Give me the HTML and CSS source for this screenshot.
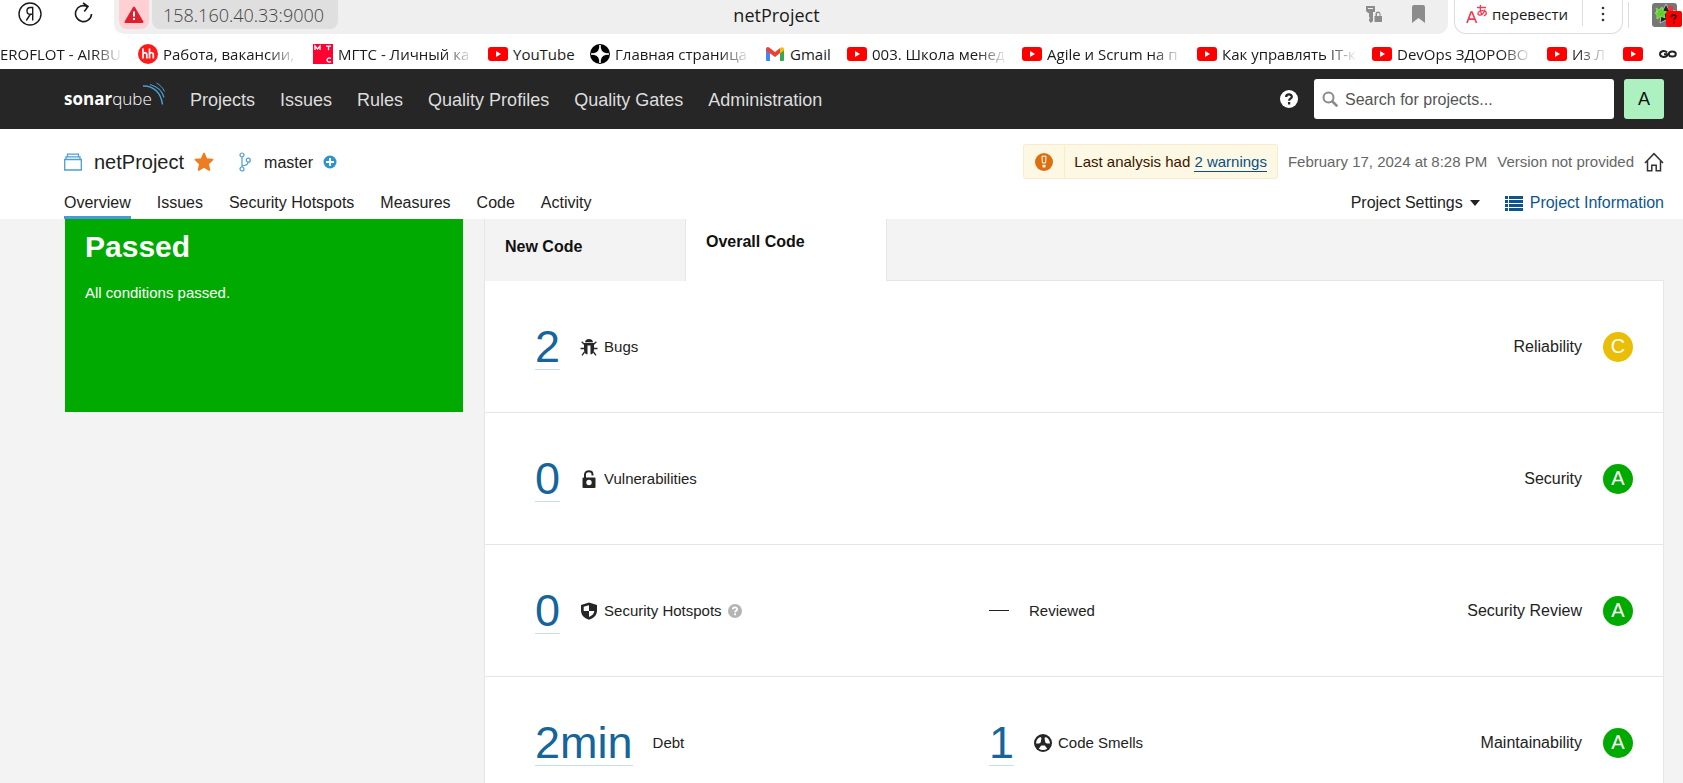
FILE: index.html
```
<!DOCTYPE html>
<html lang="en">
<head>
<meta charset="utf-8">
<title>netProject</title>
<link rel="stylesheet" href="styles.css">
</head>
<body>
<svg class="defs" aria-hidden="true">
  <symbol id="yt" viewBox="0 0 20 20"><rect y="3" width="20" height="14" rx="3" fill="#f00"/><path d="M8 7v6l5-3z" fill="#fff"/></symbol>
</svg>
<div class="app">
  <div class="browser">
    <div class="toolbar">
      <button class="tool ya" aria-label="Yandex"><svg width="24" height="24" viewBox="0 0 24 24" fill="none" stroke="#1a1a1a" stroke-width="1.4"><circle cx="12" cy="12" r="11"/><path d="M14.7 18.5V5.5h-2.2c-2.200 0-3.500 1.400-3.500 3.500 0 2 1.200 3.300 3.300 3.300h2.400M12.200 12.500l-3.900 6"/></svg></button>
      <button class="tool reload" aria-label="Reload"><svg width="20" height="22" viewBox="0 0 20 22" fill="none" stroke="#1a1a1a" stroke-width="1.600"><path d="M17.500 12a8 8 0 1 1-4-7.300M9 .8l5 3.700-3.700 5"/></svg></button>
      <div class="omnibox">
        <button class="alert" aria-label="Not secure"><svg width="20" height="18" viewBox="0 0 20 18"><path d="M10 1.500 18.500 16H1.500z" fill="#e0202e" stroke="#e0202e" stroke-width="2" stroke-linejoin="round"/><path d="M10 5.500v5M10 12v2" stroke="#fff" stroke-width="2"/></svg></button>
        <button class="url">158.160.40.33:9000</button>
        <span class="page-title">netProject</span>
        <span class="omni-icons">
          <svg width="18" height="18" viewBox="0 0 18 18" fill="#8c8c8c"><path d="M1 1h9v6H8v9l-2 2-2-2v-2l1-1-1-1V8H3L1 6zM3 3v1h5V3z" fill-rule="evenodd"/><path d="M9.500 11h1V9a2.500 2.500 0 0 1 5 0v2h1.500v6H9.500zm2.500 0h2.500V9.300c0-1.600-2.500-1.600-2.500 0z" fill-rule="evenodd"/></svg>
          <svg width="13" height="18" viewBox="0 0 13 18" fill="#8c8c8c"><path d="M2 0h9a2 2 0 0 1 2 2v16l-6.500-5L0 18V2a2 2 0 0 1 2-2z"/></svg>
        </span>
      </div>
      <div class="translate">
        <button class="tr-main"><svg width="22" height="20" viewBox="0 0 22 20" fill="none" stroke="#f33b52" stroke-width="1.700"><path d="M1 19 5 8h1l4.500 11M2.500 15.200h6.500"/><path d="M11 3.500h9M14.500.8c-.5 4-.3 7 1.300 9.500M19 5.500c-1.500 4.500-4 6-6 5.500-2.500-.8-.5-4.800 4-4.300 4 .3 4.500 3.800.7 5.300" stroke-width="1.300"/></svg>перевести</button>
        <button class="tr-more" aria-label="More"><svg width="4" height="16" viewBox="0 0 4 16" fill="#333"><circle cx="2" cy="2" r="1.300"/><circle cx="2" cy="8" r="1.300"/><circle cx="2" cy="14" r="1.300"/></svg></button>
      </div>
      <button class="ext" aria-label="Extension"><svg width="31" height="26" viewBox="0 0 31 26"><rect x="0" y="1" width="25" height="24" rx="3" fill="#777"/><path d="m14 2 3 6 7 1-5 5 1 7-6-3-6 3 1-7-5-5 7-1z" fill="#222" stroke="#bbb"/><path d="M16 4h5v7h-4z" fill="#e33"/><path d="m4 6 3 2 3-3 1 4 4 1-3 2 1 4-4-2-4 3v-4l-2-2 3-1z" fill="#6c3" stroke="#7e4"/><rect x="14" y="9" width="16" height="16" rx="2" fill="#f00"/><path d="M19.500 15.200c0-3 4.500-2.800 4.500-.4 0 1.700-2.200 1.500-2.200 3.400M21.800 19.800v2" stroke="#400" stroke-width="1.800" fill="none"/></svg></button>
    </div>
    <nav class="bookmarks" aria-label="Bookmarks">
      <a href="#" class="bm first"><span>EROFLOT - AIRBU</span></a>
      <a href="#" class="bm"><svg width="20" height="20" viewBox="0 0 20 20"><circle cx="10" cy="10" r="10" fill="#ff1a1a"/><path d="M5 4.500v10M5 10.500c.5-2.400 3.800-2.400 3.800.2v3.800M11.500 4.500v10M11.500 10.500c.5-2.400 3.800-2.400 3.800.2v3.800" stroke="#fff" stroke-width="1.700" fill="none"/></svg><span>Работа, вакансии,</span></a>
      <a href="#" class="bm"><svg width="20" height="20" viewBox="0 0 20 20"><path fill="#ff0032" d="M0 0h20v20H0z"/><path d="M2 6V2l2.500 3L7 2v4M13 2.200h5M15.500 2v4.200M18 14.500c-1.500-1.200-4-.6-4 1.500s2.500 2.700 4 1.500" stroke="#fff" stroke-width="1.300" fill="none"/></svg><span>МГТС - Личный ка</span></a>
      <a href="#" class="bm w-62"><svg width="20" height="20"><use href="#yt"/></svg><span>YouTube</span></a>
      <a href="#" class="bm"><svg width="20" height="20" viewBox="0 0 20 20"><circle cx="10" cy="10" r="10"/><path d="M10 1c.6 6.500 2.500 8.400 9 9-6.500.6-8.400 2.500-9 9-.6-6.500-2.500-8.400-9-9 6.500-.6 8.400-2.500 9-9z" fill="#fff" stroke="#fff"/></svg><span>Главная страница</span></a>
      <a href="#" class="bm w-42"><svg width="20" height="20" viewBox="0 0 20 20"><path fill="#4285f4" d="M1 5h4v12H2a1 1 0 0 1-1-1z"/><path fill="#34a853" d="M15 5h4v11a1 1 0 0 1-1 1h-3z"/><path fill="#ea4335" d="M1 5.500c0-2.500 2-3 3.500-1.800L10 8l5.500-4.300v5L10 13 1 6.500z"/><path fill="#fbbc04" d="M15 4c2-1.500 4-.6 4 1.500v1L15 9.500z"/></svg><span>Gmail</span></a>
      <a href="#" class="bm"><svg width="20" height="20"><use href="#yt"/></svg><span>003. Школа менед</span></a>
      <a href="#" class="bm"><svg width="20" height="20"><use href="#yt"/></svg><span>Agile и Scrum на п</span></a>
      <a href="#" class="bm"><svg width="20" height="20"><use href="#yt"/></svg><span>Как управлять IT-к</span></a>
      <a href="#" class="bm"><svg width="20" height="20"><use href="#yt"/></svg><span>DevOps ЗДОРОВО</span></a>
      <a href="#" class="bm w-36"><svg width="20" height="20"><use href="#yt"/></svg><span>Из Л</span></a>
      <a href="#" class="bm" aria-label="YouTube"><svg width="20" height="20"><use href="#yt"/></svg></a>
      <a href="#" class="bm" aria-label="GO"><svg width="20" height="20" viewBox="0 0 20 20" fill="none" stroke="#222" stroke-width="2"><path d="M9 8.500C6.500 6 2 7.200 2 10s4.500 4 7 1.700V10.300H6"/><ellipse cx="14.300" cy="10" rx="3.500" ry="2.600"/></svg></a>
    </nav>
  </div>

  <header class="global">
    <a href="#" class="logo" aria-label="sonarqube"><span class="word"><b>sonar</b>qube</span><svg width="24" height="24" viewBox="0 0 24 24" fill="none" stroke="#4b9fd5"><path d="M1 4c10-.5 18 6.500 19.500 18.500" stroke-width="1.500"/><path d="M8 2.500c7 2 12.500 7 14 13" stroke-width="1.200"/><path d="M14.500 1c3.500 2 6.500 4.800 8 8.500"/></svg></a>
    <nav class="menu" aria-label="Main">
      <a href="#">Projects</a><a href="#">Issues</a><a href="#">Rules</a><a href="#">Quality Profiles</a><a href="#">Quality Gates</a><a href="#">Administration</a>
    </nav>
    <button class="plain help" aria-label="Help"><svg width="18" height="18" viewBox="0 0 18 18"><circle cx="9" cy="9" r="9" fill="#fff"/><path d="M6.200 6.900c0-3.300 5.600-3.200 5.600-.2 0 2-2.700 2-2.700 4M9.100 12v2.400" stroke="#262626" stroke-width="2.300" fill="none"/></svg></button>
    <label class="search"><svg width="16" height="16" viewBox="0 0 16 16" fill="none" stroke="#8a8a8a"><circle cx="6.500" cy="6.500" r="5" stroke-width="2"/><path d="m10.300 10.300 4.200 4.200" stroke-width="2.600" stroke-linecap="round"/></svg><input type="text" placeholder="Search for projects..." aria-label="Search for projects"></label>
    <button class="avatar">A</button>
  </header>

  <div class="project">
    <div class="row">
      <div class="crumbs">
        <svg width="18" height="18" viewBox="0 0 18 18" fill="none" stroke="#4b9fd5" stroke-width="1.300"><path d="M.7 6.500h16.600V17H.7zM2 6.300V3.800h14v2.500M3.500 3.500V1.200h11v2.300"/></svg>
        <a href="#" class="name">netProject</a>
        <button class="plain star" aria-label="Favorite"><svg width="20" height="20" viewBox="0 0 20 20"><path d="m10 1.500 2.500 5.600 6 .6-4.500 4.100 1.300 6.200-5.300-3.200L4.700 18 6 11.800 1.500 7.700l6-.6z" fill="#ed7d20" stroke="#ed7d20" stroke-width="1.800" stroke-linejoin="round"/></svg></button>
        <svg class="branch" width="12" height="20" viewBox="0 0 12 20" fill="none" stroke="#4b9fd5" stroke-width="1.200"><circle cx="3" cy="3" r="2"/><circle cx="3" cy="17" r="2"/><circle cx="9.300" cy="8.200" r="2"/><path d="M3 5v10M9 10.200c0 2.500-2 3.300-6 3.600"/></svg>
        <span class="branch-name">master</span>
        <button class="plain plus" aria-label="More branches"><svg width="14" height="14" viewBox="0 0 14 14"><circle cx="7" cy="7" r="6.500" fill="#2d94d2"/><path d="M7 3v8M3 7h8" stroke="#fff" stroke-width="2"/></svg></button>
      </div>
      <div class="meta">
        <div class="warning">
          <span class="warn-icon"><svg width="18" height="18" viewBox="0 0 18 18"><circle cx="9" cy="9" r="9" fill="#dd6f10"/><path d="M7 3.200h4L10.600 10H7.400z" fill="#dd6f10" stroke="#fff"/><path d="M7.500 11.800h3v2.600h-3z" fill="#fff"/></svg></span>
          <span class="warn-text">Last analysis had <a href="#">2 warnings</a></span>
        </div>
        <span>February 17, 2024 at 8:28 PM</span>
        <span>Version not provided</span>
        <button class="plain" aria-label="Home"><svg width="20" height="20" viewBox="0 0 20 20" fill="none" stroke="#333" stroke-width="1.500"><path d="m1 11 9-9.300L19 11M3.500 9v9.700h4.300v-5.400h4.400v5.400h4.300V9"/></svg></button>
      </div>
    </div>
    <div class="row tabs">
      <nav class="tabs-left" aria-label="Project">
        <a href="#" class="on">Overview</a><a href="#">Issues</a><a href="#">Security Hotspots</a><a href="#">Measures</a><a href="#">Code</a><a href="#">Activity</a>
      </nav>
      <nav class="tabs-right" aria-label="Project tools">
        <button class="plain settings">Project Settings<svg width="10" height="6" viewBox="0 0 10 6"><path d="M0 0h10L5 6z" fill="#222"/></svg></button>
        <a href="#" class="info"><svg width="18" height="15" viewBox="0 0 18 15" fill="#0e558f"><path d="M0 0h3v3H0zM0 4h3v3H0zM0 8h3v3H0zM0 12h3v3H0zM4 0h14v3H4zM4 4h14v3H4zM4 8h14v3H4zM4 12h14v3H4z"/></svg>Project Information</a>
      </nav>
    </div>
  </div>

  <main class="content">
    <section class="gate">
      <h1>Passed</h1>
      <p>All conditions passed.</p>
    </section>
    <section class="measures">
      <div class="code-tabs">
        <button class="code-tab">New Code</button>
        <button class="code-tab sel">Overall Code</button>
        <span class="filler"></span>
      </div>
      <div class="measure">
        <div class="cell"><a href="#" class="num">2</a><span class="lbl"><svg width="18" height="18" viewBox="0 0 18 18" fill="#262626"><path d="M5 4.200C5.300 1.800 6.800 1 9 1s3.700.8 4 3.200z"/><path d="M4 5h10v6.500c0 3-1.200 4.500-3.500 5V7.500h-3v9C5.200 16 4 14.500 4 11.500z"/><path d="M4.500 6.500 1.700 3.700M13.500 6.500l2.800-2.800M4 10.500H.5M14 10.500h3.500M4.500 14l-2.500 3.300M13.500 14l2.500 3.300" stroke="#262626" stroke-width="1.300"/></svg>Bugs</span></div>
        <div class="rating"><span>Reliability</span><a href="#" class="badge c">C</a></div>
      </div>
      <div class="measure">
        <div class="cell"><a href="#" class="num">0</a><span class="lbl"><svg width="18" height="18" viewBox="0 0 18 18"><path d="M5 8V4.500C5 .2 12.500.2 12.500 4.500V5.500" fill="none" stroke="#262626" stroke-width="2"/><path d="M3.500 7.500h11a1 1 0 0 1 1 1V17a1 1 0 0 1-1 1h-11a1 1 0 0 1-1-1V8.500a1 1 0 0 1 1-1z" fill="#262626"/><circle cx="9" cy="12.500" r="2.700" fill="#fff"/></svg>Vulnerabilities</span></div>
        <div class="rating"><span>Security</span><a href="#" class="badge">A</a></div>
      </div>
      <div class="measure">
        <div class="cell"><a href="#" class="num">0</a><span class="lbl"><svg width="18" height="18" viewBox="0 0 18 18"><path d="M9 .5 17 3v5.500c0 4.500-3 7.500-8 9.300-5-1.800-8-4.800-8-9.300V3z" fill="#262626"/><path d="M9 3.200V9H3.700V4.800zM9 9h5.300c-.2 2.500-2 4.500-5.300 6z" fill="#fff"/></svg>Security Hotspots<svg width="14" height="14" viewBox="0 0 18 18"><circle cx="9" cy="9" r="9" fill="#b4b4b4"/><path d="M6.200 6.900c0-3.300 5.600-3.200 5.600-.2 0 2-2.700 2-2.700 4M9.100 12v2.400" stroke="#fff" stroke-width="2.300" fill="none"/></svg></span></div>
        <div class="cell"><span class="dash"></span><span class="lbl">Reviewed</span></div>
        <div class="rating"><span>Security Review</span><a href="#" class="badge">A</a></div>
      </div>
      <div class="measure">
        <div class="cell"><a href="#" class="num">2min</a><span class="lbl">Debt</span></div>
        <div class="cell"><a href="#" class="num">1</a><span class="lbl"><svg width="18" height="18" viewBox="0 0 18 18"><circle cx="9" cy="9" r="9" fill="#262626"/><path d="M2 9.500C2.200 6.300 3.700 4 6.300 3L7.500 4 6.700 8.500l-1.500 1zM16 9.500c-.2-3.200-1.700-5.500-4.300-6.500L10.500 4l.8 4.500 1.500 1zM4.800 14.700l2.400-3.200h3.600l2.400 3.200c-2.500 1.700-5.900 1.700-8.400 0z" fill="#fff"/></svg>Code Smells</span></div>
        <div class="rating"><span>Maintainability</span><a href="#" class="badge">A</a></div>
      </div>
    </section>
  </main>
</div>
</body>
</html>
```
FILE: styles.css
```
* { box-sizing: border-box; }
body {
  margin: 0;
  background: #f3f3f3;
  color: #222;
  font-family: "Liberation Sans", Arial, sans-serif;
  font-size: 16px;
  line-height: 20px;
}
a { color: inherit; text-decoration: none; }
button { font: inherit; color: inherit; border: 0; margin: 0; cursor: pointer; }
svg { display: block; flex: none; }
.defs { position: absolute; width: 0; height: 0; }
.plain { background: none; padding: 0; }
.app { height: 100vh; overflow: hidden; display: flex; flex-direction: column; }

/* Browser chrome */
.browser {
  flex: none;
  background: #fff;
  color: #1a1a1a;
  font-family: "Open Sans", "Noto Sans", sans-serif;
}
.toolbar { display: flex; height: 34px; }
.tool { background: none; padding: 2px 0 0; display: flex; justify-content: center; }
.ya { width: 59px; }
.reload { width: 50px; }
.omnibox {
  flex: 1;
  margin-left: 5px;
  padding-left: 5px;
  display: flex;
  align-items: flex-start;
  background: #efefef;
  border-radius: 0 0 10px 10px;
}
.alert {
  width: 30px;
  height: 29px;
  padding: 0;
  display: flex;
  align-items: center;
  justify-content: center;
  background: #ffd0d3;
  border-radius: 0 0 8px 8px;
}
.url {
  margin-left: 3px;
  height: 29px;
  padding: 0 14px 0 11px;
  background: #dfdfdf;
  border-radius: 0 0 8px 8px;
  color: #444;
  font-size: 18px;
  font-weight: 300;
}
.page-title { flex: 1; text-align: center; font-size: 18px; line-height: 31px; padding-right: 150px; }
.omni-icons { display: flex; gap: 29px; padding: 5px 23px 0 0; }
.translate {
  margin-left: 6px;
  width: 169px;
  display: flex;
  border: 1px solid #dcdcdc;
  border-top: 0;
  border-radius: 0 0 12px 12px;
}
.tr-main {
  display: flex;
  align-items: center;
  gap: 4px;
  height: 26px;
  padding: 2px 0 0 11px;
  width: 128px;
  background: none;
  border-right: 1px solid #ddd;
  font-size: 15px;
}
.tr-more { flex: 1; display: flex; justify-content: center; align-items: flex-start; padding: 6px 0 0; background: none; }
.ext { margin: 2px 0 0 5px; padding: 0 0 0 23px; height: 26px; background: none; border-left: 1px solid #ddd; }
.bookmarks { display: flex; gap: 15px; height: 35px; padding-top: 10px; overflow: hidden; }
.bm { flex: none; display: flex; gap: 5px; height: 20px; font-size: 15px; }
.bm span {
  width: 135px;
  white-space: nowrap;
  mask-image: linear-gradient(to right, #000 calc(100% - 30px), transparent);
}
.bm.first span { width: 123px; }
.bm.w-62 span { width: 62px; mask-image: none; }
.bm.w-42 span { width: 42px; mask-image: none; }
.bm.w-36 span { width: 36px; }

/* Global navigation */
.global {
  flex: none;
  height: 60px;
  padding: 0 19px 0 64px;
  display: flex;
  align-items: center;
  background: #262626;
  color: #fff;
}
.logo { display: flex; align-items: center; width: 126px; }
.word { font: 300 17px/24px "Open Sans", sans-serif; }
.word b { font-weight: 700; }
.logo svg { margin: 0 0 10px -10px; }
.menu { flex: 1; display: flex; gap: 25px; padding-top: 1px; font-size: 18px; color: #ddd; }
.help { margin-right: 16px; }
.search {
  width: 300px;
  height: 40px;
  padding: 0 8px;
  display: flex;
  align-items: center;
  gap: 7px;
  background: #fff;
  border-radius: 3px;
}
.search input { flex: 1; min-width: 0; border: 0; padding: 1px 0 0; font: inherit; background: none; outline: 0; }
.search input::placeholder { color: #555; opacity: 1; }
.avatar { margin-left: 10px; width: 40px; height: 40px; padding: 0; background: #adf1c0; border-radius: 3px; color: #111; font-size: 18px; }

/* Project header */
.project {
  flex: none;
  height: 90px;
  padding: 12px 19px 0 64px;
  background: #fff;
  display: flex;
  flex-direction: column;
  justify-content: space-between;
}
.row { display: flex; justify-content: space-between; }
.crumbs, .meta { display: flex; align-items: center; height: 41px; }
.name { margin: 0 10px 0 12px; font-size: 20px; }
.branch { margin: 0 13px 0 25px; }
.branch-name { padding-top: 2px; }
.plus { margin-left: 10px; }
.meta { gap: 10px; font-size: 15px; color: #666; }
.warning {
  display: flex;
  height: 35px;
  border: 1px solid #faebcc;
  border-radius: 3px;
  background: #fcf8e3;
  color: #3a1500;
}
.warn-icon { width: 41px; display: flex; align-items: center; justify-content: center; border-right: 1px solid #faebcc; }
.warn-text { padding: 7px 10px 0 9px; line-height: 19px; }
.warn-text a { display: inline-block; color: #0a4f8a; border-bottom: 1px solid #0a4f8a; }
.tabs { height: 34px; }
.tabs-left { display: flex; gap: 26px; }
.tabs-right { display: flex; gap: 25px; }
.tabs-left a { padding-top: 8px; height: 34px; }
.tabs-left .on { border-bottom: 3px solid #4a97e0; }
.settings, .info { display: flex; align-items: center; gap: 7px; height: 34px; padding-top: 2px; }
.info { color: #0e558f; }

/* Overview */
.content { flex: 1; display: flex; gap: 21px; align-items: flex-start; padding: 0 19px 0 65px; min-height: 0; }
.gate { flex: 0 0 398px; height: 193px; padding: 10px 20px; background: #0a0; color: #fff; }
.gate h1 { margin: 0; font-size: 30px; line-height: 36px; }
.gate p { margin: 18px 0 0; font-size: 15px; }
.measures { flex: 1; background: #fff; border: 1px solid #e6e6e6; border-width: 0 1px; }
.code-tabs { display: flex; height: 62px; margin-right: -1px; }
.code-tab {
  width: 201px;
  padding: 0 20px 6px;
  background: #f3f3f3;
  border-right: 1px solid #e6e6e6;
  font-weight: 700;
  text-align: left;
  color: #111;
}
.code-tab.sel { padding-bottom: 16px; background: #fff; }
.filler { flex: 1; background: #f3f3f3; border-bottom: 1px solid #e6e6e6; }
.measure { display: flex; align-items: center; height: 132px; padding: 0 30px 0 50px; border-bottom: 1px solid #e6e6e6; }
.cell { flex: 0 0 454px; display: flex; align-items: center; }
.num { color: #15659b; font-size: 45px; line-height: 45px; border-bottom: 1px solid #c5dfee; }
.lbl { display: flex; align-items: center; gap: 6px; margin-left: 20px; font-size: 15px; }
.dash { width: 20px; height: 1px; background: #222; }
.rating { margin-left: auto; display: flex; align-items: center; gap: 21px; }
.badge { width: 30px; height: 30px; border-radius: 50%; background: #0a0; color: #fff; font-size: 20px; line-height: 29px; text-align: center; }
.badge.c { background: #eabe06; }
```
